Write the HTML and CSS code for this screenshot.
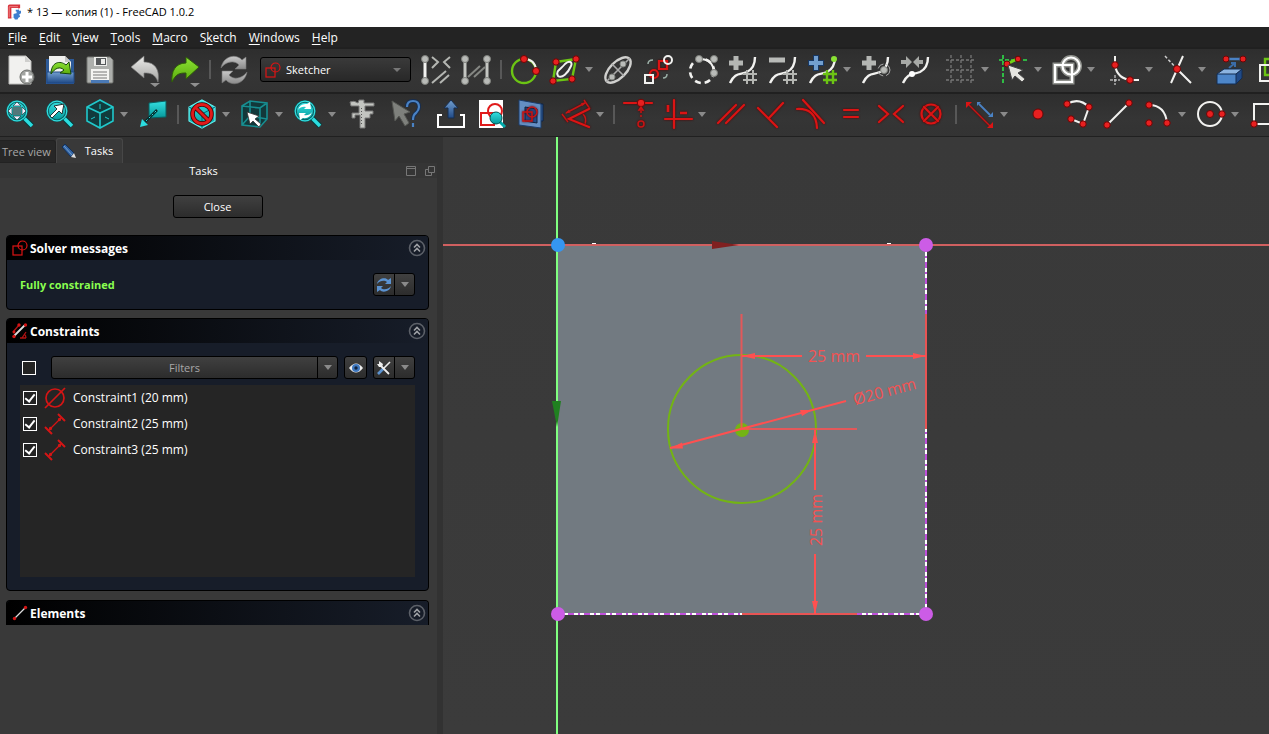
FILE: index.html
```html
<!DOCTYPE html>
<html lang="en">
<head>
<meta charset="utf-8">
<title>* 13 — копия (1) - FreeCAD 1.0.2</title>
<link rel="stylesheet" href="styles.css">
</head>
<body>
<svg class="defs" aria-hidden="true">
  <defs>
    <linearGradient id="cyan" x1="0" y1="0" x2="0" y2="1"><stop offset="0" stop-color="#34e0e2"/><stop offset="1" stop-color="#06989a"/></linearGradient>
    <linearGradient id="blue" x1="0" y1="0" x2="0" y2="1"><stop offset="0" stop-color="#729fcf"/><stop offset="1" stop-color="#204a87"/></linearGradient>
    <linearGradient id="green" x1="0" y1="0" x2="0" y2="1"><stop offset="0" stop-color="#8ae234"/><stop offset="1" stop-color="#5cab0c"/></linearGradient>
    <linearGradient id="grey" x1="0" y1="0" x2="0" y2="1"><stop offset="0" stop-color="#c8c8c8"/><stop offset="1" stop-color="#8a8a8a"/></linearGradient>
    <linearGradient id="silver" x1="0" y1="0" x2="0" y2="1"><stop offset="0" stop-color="#ececea"/><stop offset="1" stop-color="#a4a4a2"/></linearGradient>
    <symbol id="sketch" viewBox="0 0 16 16"><rect x="1" y="6" width="9" height="9"/><circle cx="10.500" cy="5.500" r="4.500"/></symbol>
    <symbol id="collapse" viewBox="0 0 18 18"><circle cx="9" cy="9" r="7.500"/><path d="M6 8.500 9 5.500l3 3M6 12.500l3-3 3 3" stroke="#a0a2a6"/></symbol>
    <symbol id="distance" viewBox="0 0 22 22"><path d="M14 1l7 7M1 14l7 7" stroke-width="2"/><path d="M5 17 17 5" stroke-width="1.200"/><circle cx="6.500" cy="15.500" r=".8"/><circle cx="15.500" cy="6.500" r=".8"/></symbol>
    <symbol id="lens" viewBox="0 0 30 30"><path d="M18 18 27 27" stroke="#053a3b" stroke-width="5.500"/><path d="M18.500 18.500 27 27" stroke="#2bdcdf" stroke-width="3.500"/><circle cx="12" cy="12" r="9.500" fill="url(#cyan)" stroke="#0a5f61" stroke-width="2.600"/><circle cx="12" cy="12" r="9.800" fill="none" stroke="#34e0e2" stroke-width="1.200"/></symbol>
    <symbol id="curve" viewBox="0 0 30 30"><path d="M2 28c5-11 10-8 17-11 6-3 8-8 8-15" fill="none" stroke="#f2f2f0" stroke-width="2.400"/></symbol>
  </defs>
</svg>

<header class="titlebar">
  <svg viewBox="0 0 16 18" aria-hidden="true"><path d="M1 3q0-2 2-2h12v4l-3 1H6v9l-1 2H1z" fill="#d8333c"/><path d="M2.500 3.500h10M2.500 3.500v12" stroke="#f08a8a" fill="none"/><path d="M10 6h3l1 2 2 0v3l-2 1 1 3-2 1-1 2H9l-1-2-2 0v-4l4-1z" fill="#3f7fd0"/><path d="M5 5h8v2H7.500v2H11v2H7.500v5H5z" fill="#fff"/></svg>
  <h1>* 13 — копия (1) - FreeCAD 1.0.2</h1>
</header>

<nav class="menubar" aria-label="Main menu">
  <button><u>F</u>ile</button><button><u>E</u>dit</button><button><u>V</u>iew</button><button><u>T</u>ools</button><button><u>M</u>acro</button><button>S<u>k</u>etch</button><button><u>W</u>indows</button><button><u>H</u>elp</button>
</nav>

<div class="toolbar" role="toolbar" aria-label="File and sketch tools">
  <div class="group">
    <button class="tool" aria-label="New"><svg viewBox="0 0 30 30"><path d="M4 1h17l5 5v23H4z" fill="#f1f1ef" stroke="#bcbcba"/><path d="M20 1v6h6" fill="#cfcfcd"/><circle cx="22" cy="22" r="7" fill="#a2a4a1" stroke="#6d6f6c"/><path d="M22 17v10M17 22h10" stroke="#fff" stroke-width="3"/></svg></button>
    <button class="tool" aria-label="Open"><svg viewBox="0 0 30 30"><path d="M1 4h28v25H1z" fill="#2d5a98"/><path d="M4 1h16l6 6v12H4z" fill="#f1f1ef"/><path d="M20 1v6h6" fill="#c4c4c2"/><path d="M2 17h27v11H2z" fill="url(#blue)" stroke="#204a87"/><path d="M6 19c0-12 9-14 15-9l3-3 2 12-11-1 4-3c-4-4-9-2-13 4z" fill="url(#green)" stroke="#17470a"/></svg></button>
    <button class="tool" aria-label="Save"><svg viewBox="0 0 30 30"><path d="M2 3q0-1 1-1h22l3 3v22q0 1-1 1H3q-1 0-1-1z" fill="#adafac" stroke="#747672"/><path d="M9 2h13v9H9z" fill="#ededeb"/><path d="M11 3h10v7H11z" fill="#55585a"/><path d="M16 4h4v5h-4z" fill="#ededeb"/><path d="M6 14h18v14H6z" fill="#f4f4f2"/><path d="M8 17h14M8 20h14M8 23h14" stroke="#777"/><path d="M6 25h18v3H6z" fill="#4a79b5"/></svg></button>
  </div>
  <div class="group">
    <button class="tool" aria-label="Undo"><svg viewBox="0 0 30 30"><path d="M1 12 14 1v6c12 0 16 9 14 20-3-8-7-9-14-9v5z" fill="url(#silver)" stroke="#777" stroke-width=".7"/><path d="M20 28h10l-5 4z" class="mini"/></svg></button>
    <button class="tool" aria-label="Redo"><svg viewBox="0 0 30 30"><path d="M29 12 16 2v6C5 8 1 17 2 27c4-8 7-9 14-9v6z" fill="url(#green)" stroke="#2e5d08"/><path d="M20 28h10l-5 4z" class="mini"/></svg></button>
    <span class="sep"></span>
    <button class="tool" aria-label="Refresh"><svg viewBox="0 0 30 30"><g fill="url(#grey)" stroke="#767676" stroke-width=".6"><path d="M2 13C4 1 17-2 23 5l4-3v12H16l4-4c-4-5-13-4-18 3z"/><path d="M28 17c-2 12-15 15-21 8l-4 3V16h11l-4 4c4 5 13 4 18-3z"/></g></svg></button>
  </div>
  <div class="combo"><svg class="sk" aria-hidden="true"><use href="#sketch"/></svg><select aria-label="Workbench"><option>Sketcher</option></select></div>
  <div class="group">
    <button class="tool" aria-label="Auto constraints"><svg viewBox="0 0 30 30"><path d="M4 3v24" class="w3"/><g class="g2"><path d="M11 2l6 5-6 6M29 2l-6 5 6 6M11 28l14-12M19 28l9-8"/></g><circle cx="4" cy="4" r="3.500" class="gn"/><circle cx="4" cy="26" r="3.500" class="gn"/></svg></button>
    <button class="tool" aria-label="Avoid redundant constraints"><svg viewBox="0 0 30 30"><path d="M4 4v22M26 4v22" class="g3"/><path d="M7 22 19 11M13 22 24 12" class="g1"/><circle cx="4" cy="4" r="3.500" class="gn"/><circle cx="26" cy="4" r="3.500" class="gn"/><circle cx="4" cy="26" r="3.500" class="gn"/><circle cx="26" cy="26" r="3.500" class="gn"/></svg></button>
    <span class="sep"></span>
    <button class="tool" aria-label="Periodic B-spline"><svg viewBox="0 0 30 30"><circle cx="14" cy="16" r="12" class="gr"/><path d="M14 4q11 0 12 11" class="w2"/><circle cx="14" cy="4" r="3.500" class="node"/><circle cx="26" cy="16" r="3.500" class="node"/></svg></button>
    <button class="tool" aria-label="B-spline geometry"><svg viewBox="0 0 30 30"><path d="M6 7 26 4 22 24 3 26z" class="gr"/><path d="M8 21c-3-5 3-7 7-12 4-4 8-2 6 2-3 7-9 13-13 10z" class="w2"/><circle cx="6" cy="7" r="3.200" class="node"/><circle cx="26" cy="4" r="3.200" class="node"/><circle cx="22" cy="24" r="3.200" class="node"/><circle cx="3" cy="26" r="3.200" class="node"/></svg></button><button class="drop" aria-label="More B-spline geometry"></button>
    <button class="tool" aria-label="Internal geometry"><svg viewBox="0 0 30 30"><ellipse cx="15" cy="15" rx="16" ry="8" transform="rotate(-45 15 15)" fill="none" stroke="#d0d0ce" stroke-width="2.400"/><path d="M3 27 27 3M9 9l12 12" stroke="#aaa" stroke-width="1.600"/><circle cx="20" cy="9" r="3" class="gn"/><circle cx="9" cy="22" r="3" class="gn"/></svg></button>
    <button class="tool" aria-label="Clone"><svg viewBox="0 0 30 30"><g class="r2"><path d="M16 6h8v8h-8z"/><circle cx="11" cy="19" r="4"/></g><path d="M2 20h8v8H2z" class="w2"/><circle cx="25" cy="5" r="4" class="w2"/><path d="M5 9q0-4 5-4M20 23q4 0 4-4" stroke="#9cb0a8" fill="none" stroke-width="1.500"/></svg></button>
  </div>
  <div class="group">
    <button class="tool" aria-label="Convert to B-spline"><svg viewBox="0 0 30 30"><circle cx="14" cy="16" r="12" fill="none" stroke="#f2f2f0" stroke-width="2.600" stroke-dasharray="6 4"/><path d="M12 4q12 0 14 12" class="w2"/><circle cx="11" cy="4" r="3.500" class="gn"/><circle cx="26" cy="4" r="3.500" class="gn"/><circle cx="26" cy="18" r="3.500" class="gn"/></svg></button>
    <button class="tool" aria-label="Increase degree"><svg viewBox="0 0 30 30"><use href="#curve"/><path d="M8 1v14M1 8h14" stroke="#b4b6b3" stroke-width="5"/><path d="M19 15v14M25 15v14M15 19h14M15 25h14" class="g2"/></svg></button>
    <button class="tool" aria-label="Decrease degree"><svg viewBox="0 0 30 30"><use href="#curve"/><path d="M1 5h16" stroke="#b9bbb8" stroke-width="5"/><path d="M19 15v14M25 15v14M15 19h14M15 25h14" class="g2"/></svg></button>
    <button class="tool" aria-label="Increase knot multiplicity"><svg viewBox="0 0 30 30"><use href="#curve"/><path d="M8 0v16M0 8h16" stroke="#173763" stroke-width="6"/><path d="M8 1v14M1 8h14" stroke="#729fcf" stroke-width="4"/><circle cx="26" cy="4" r="3" fill="#8ae234"/><path d="M19 15v14M25 15v14M15 19h14M15 25h14" class="gr"/></svg></button><button class="drop" aria-label="More knot tools"></button>
    <button class="tool" aria-label="Insert knot"><svg viewBox="0 0 30 30"><use href="#curve"/><path d="M8 1v14M1 8h14" stroke="#b4b6b3" stroke-width="5"/><circle cx="23" cy="15" r="3.500" class="gn"/><circle cx="23" cy="15" r="6" fill="none" stroke="#aaa" stroke-dasharray="7 3"/></svg></button>
    <button class="tool" aria-label="Join curves"><svg viewBox="0 0 30 30"><use href="#curve"/><path d="M0 5h5V1l6 6-6 6V9H0zM22 5h-4V1l-6 6 6 6V9h4z" fill="#a7a9a6"/><circle cx="11" cy="19" r="3" fill="#fff"/></svg></button>
  </div>
  <div class="group">
    <button class="tool" aria-label="Toggle grid"><svg viewBox="0 0 30 30"><path d="M5 0v30M15 0v30M25 0v30M0 5h30M0 15h30M0 25h30" stroke="#777" stroke-width="1.300" stroke-dasharray="3 2"/></svg></button><button class="drop" aria-label="Grid options"></button>
    <button class="tool" aria-label="Toggle snap"><svg viewBox="0 0 30 30"><path d="M4 0v30M0 5h30" stroke="#2fe04a" stroke-width="1.600" stroke-dasharray="4 2"/><path d="M8 9 18 4" stroke="#73d216" stroke-width="3"/><circle cx="8" cy="9" r="3" class="node"/><circle cx="19" cy="4" r="2.800" class="node"/><path d="M9 10l4 15 3-4 7 6 3-3-7-6 5-3z" fill="#e5e5e0" stroke="#444"/></svg></button><button class="drop" aria-label="Snap options"></button>
    <button class="tool" aria-label="Rendering order"><svg viewBox="0 0 30 30"><g fill="none" stroke="#92948f" stroke-width="5"><path d="M3 10h17v17H3z"/><circle cx="19" cy="11" r="8.500"/></g><g fill="none" stroke="#fff" stroke-width="2.200"><path d="M3 10h17v17H3z"/><circle cx="19" cy="11" r="8.500"/></g></svg></button><button class="drop" aria-label="Rendering options"></button>
  </div>
  <div class="group">
    <button class="tool" aria-label="Fillet"><svg viewBox="0 0 30 30"><path d="M5 1v9q2 14 17 15h7" class="w2"/><path d="M0 25h10M5 20v10" stroke="#eee" stroke-dasharray="3 1"/><circle cx="5" cy="10" r="3.300" class="node"/><circle cx="20" cy="25" r="3.300" class="node"/></svg></button><button class="drop" aria-label="More fillet tools"></button>
    <button class="tool" aria-label="Trim"><svg viewBox="0 0 30 30"><path d="M20 1 8 28M14 14 28 28" class="w2"/><path d="M2 1l12 13" stroke="#ccc" stroke-width="1.500" stroke-dasharray="3 2"/><circle cx="14" cy="14" r="3.500" class="node"/></svg></button><button class="drop" aria-label="More trim tools"></button>
    <button class="tool" aria-label="External geometry"><svg viewBox="0 0 30 30"><path d="M9 4h18" stroke="#4a82c4" stroke-width="2.500"/><circle cx="10" cy="4" r="3" class="node"/><circle cx="27" cy="4" r="3" class="node"/><path d="M13 13l6-5m-4 0h4v4" stroke="#3a6ca8" fill="none" stroke-width="2"/><path d="M1 19l7-5h18l-6 5z" fill="#8cb4e0"/><path d="M1 19h19v10H1z" fill="#4d86c9"/><path d="M20 19l6-5v9l-6 6z" fill="#204a87"/><path d="M1 19l7-5h18v9l-6 6H1zM1 19h19v10M20 19l6-5" fill="none" stroke="#122c52"/></svg></button>
    <button class="tool" aria-label="Carbon copy"><svg viewBox="0 0 30 30"><path d="M9 4h19v16H9z" class="gr"/><path d="M4 10h16v16H4z" class="w2"/></svg></button>
  </div>
</div>

<div class="toolbar last" role="toolbar" aria-label="View and constraint tools">
  <div class="group">
    <button class="tool" aria-label="Fit all"><svg viewBox="0 0 30 30"><use href="#lens"/><path d="M12 3l4 4H8zM12 21l4-4H8zM3 12l4-4v8zM21 12l-4-4v8z" fill="#eef" stroke="#244" stroke-width=".7"/><path d="M8 8h8v8H8z" fill="#52777a"/></svg></button>
    <button class="tool" aria-label="Fit selection"><svg viewBox="0 0 30 30"><use href="#lens"/><path d="M5 17l7-7-3-3 10-2-2 10-3-3-7 7z" fill="#fff" stroke="#233"/></svg></button>
    <button class="tool" aria-label="Isometric view"><svg viewBox="0 0 30 30"><path d="M15 1 28 8v14l-13 7L2 22V8z" fill="#113b3d" stroke="#20c9cc" stroke-width="1.600"/><path d="M2 8l13 6 13-6M15 14v15" stroke="#20c9cc" fill="none" stroke-width="1.600"/><path d="M15 5v5M6 20l4-2M20 18l4 2" stroke="#20c9cc"/></svg></button><button class="drop" aria-label="More views"></button>
    <button class="tool" aria-label="Align to face"><svg viewBox="0 0 30 30"><path d="M11 4l17-2v16l-17 1z" fill="url(#cyan)" stroke="#0a5f61"/><path d="M19 11 5 25" stroke="#052c2d" stroke-width="2.500"/><path d="M18 12 6 24" stroke="#34e0e2" stroke-dasharray="2 2"/><path d="M2 28l2-8 6 6z" fill="#2bdcdf"/></svg></button>
    <span class="sep"></span>
    <button class="tool" aria-label="Clipping"><svg viewBox="0 0 30 30"><path d="M15 1 28 8v14l-13 7L2 22V8z" fill="url(#cyan)" stroke="#5ff0f0" stroke-width="1.200"/><path d="M2 8l13 7 13-7M15 15v14" stroke="#067" fill="none"/><circle cx="15" cy="15" r="9.500" fill="none" stroke="#400" stroke-width="4.500"/><path d="M8 8l14 14" stroke="#400" stroke-width="4.500"/><circle cx="15" cy="15" r="9.500" fill="none" stroke="#e01b1b" stroke-width="2.800"/><path d="M8 8l14 14" stroke="#e01b1b" stroke-width="2.800"/></svg></button><button class="drop" aria-label="Draw style"></button>
    <button class="tool" aria-label="Bounding box"><svg viewBox="0 0 30 30"><path d="M2 7l8-5 17 2v16l-7 8-18-2z" fill="#12383a"/><path d="M2 7l18 2 7-5M20 9v19M10 2v15l17 3M10 17l-8 9M2 7l8-5 17 2v16l-7 8-18-2z" fill="none" stroke="#178e91" stroke-width="1.600"/><path d="M7 13l3 12 3-3 6 6 2-3-6-5 4-3z" fill="#fff" stroke="#333" stroke-width=".8"/></svg></button><button class="drop" aria-label="Selection options"></button>
    <button class="tool" aria-label="Sync view"><svg viewBox="0 0 30 30"><use href="#lens"/><path d="M5 11q2-7 9-6l3-2 1 7h-7l2-2q-5-1-8 3zM19 13q-2 7-9 6l-3 2-1-7h7l-2 2q5 1 8-3z" fill="#fff"/></svg></button><button class="drop" aria-label="Zoom options"></button>
    <button class="tool" aria-label="Measure"><svg viewBox="0 0 30 30"><path d="M4 3q4-2 8 1l1-3h5v3h10v3h-9v5h8v3h-3v4h-5v10h-5V16H9v3H6v-5h7V7H5z" fill="#c3c5c1" stroke="#777"/><path d="M15.500 9v18" stroke="#555" stroke-dasharray="1 2"/></svg></button>
  </div>
  <div class="group"><button class="tool" aria-label="What's this"><svg viewBox="0 0 30 30"><path d="M1 2l3 20 4-5 6 10 4-3-5-9 6-2z" fill="#7e807c" stroke="#555753"/><path d="M16 8q0-6 6-6 6 0 6 6 0 3-3 6-3 2-3 7" fill="none" stroke="#172e50" stroke-width="4"/><path d="M16 8q0-6 6-6 6 0 6 6 0 3-3 6-3 2-3 7M22 24v4" fill="none" stroke="#4a82c4" stroke-width="2.200"/></svg></button></div>
  <div class="group">
    <button class="tool" aria-label="Leave sketch"><svg viewBox="0 0 30 30"><path d="M6 16H2v12h26V16h-4" fill="none" stroke="#fff" stroke-width="2"/><path d="M15 1l7 8h-4v10h-6V9H8z" fill="url(#blue)" stroke="#172e50"/></svg></button>
    <button class="tool" aria-label="View sketch"><svg viewBox="0 0 30 30"><path d="M3 1h24v28H3z" fill="#fff"/><g fill="none" stroke="#e01b1b" stroke-width="2"><path d="M5 14h13v12H5z"/><circle cx="19" cy="12" r="7"/></g><path d="M24 23l5 5" stroke="#0aa" stroke-width="3"/><circle cx="20" cy="19" r="6" fill="url(#cyan)" stroke="#055"/></svg></button>
    <button class="tool" aria-label="View section"><svg viewBox="0 0 30 30"><path d="M10 5h17v17H10z" fill="#2d5a98" stroke="#0d2344"/><path d="M3 1l22 4v24L3 26z" fill="#648fc4" stroke="#1c3c69"/><path d="M9 8l12 2v14l-12-2z" fill="#224c89" stroke="#10233f"/><g class="r1"><path d="M7 13h9v9H7z"/><circle cx="16" cy="13" r="5"/></g></svg></button>
  </div>
  <div class="group">
    <button class="tool" aria-label="Dimension"><svg viewBox="0 0 30 30"><g class="r1"><path d="M1 15l6 8M23 1l6 9M5 14 24 4"/><path d="M22 15q4 4 2 10"/></g><path d="M4 14.500l4-4 1.500 3zM25 3.500l-5 .5 1.500 3z" fill="#c81414"/><path d="M28 10 8 20l20 8" class="r2"/></svg></button><button class="drop" aria-label="More dimensions"></button>
    <span class="sep"></span>
    <button class="tool" aria-label="Constrain coincident"><svg viewBox="0 0 30 30"><path d="M1 4h28" class="r2"/><circle cx="18" cy="4" r="3.800" class="node"/><g class="r1"><path d="M18 12v8" stroke-dasharray="2 2"/><path d="M16 11l2-3 2 3z"/><circle cx="18" cy="25" r="3"/></g></svg></button>
    <button class="tool" aria-label="Constrain horizontal or vertical"><svg viewBox="0 0 30 30"><path d="M11 1v28M2 20h27" class="r2"/><path d="M5 6v7M17 14h7" class="r3"/></svg></button><button class="drop" aria-label="More orientation constraints"></button>
    <button class="tool" aria-label="Constrain parallel"><svg viewBox="0 0 30 30"><path d="M2 24 20 6M10 24 28 6" class="r2"/></svg></button>
    <button class="tool" aria-label="Constrain perpendicular"><svg viewBox="0 0 30 30"><path d="M2 9l19 19M13 19 27 4" class="r2"/></svg></button>
    <button class="tool" aria-label="Constrain tangent"><svg viewBox="0 0 30 30"><path d="M7 1 28 24M1 10q19-1 20 19" class="r2"/></svg></button>
    <button class="tool" aria-label="Constrain equal"><svg viewBox="0 0 30 30"><path d="M8 11h14M8 18h14" class="r2"/></svg></button>
    <button class="tool" aria-label="Constrain symmetric"><svg viewBox="0 0 30 30"><path d="M3 7l9 8-9 8M27 7l-9 8 9 8" class="r2"/></svg></button>
    <button class="tool" aria-label="Constrain block"><svg viewBox="0 0 30 30"><circle cx="15" cy="15" r="9.500" class="r2"/><path d="M8 8l14 14M22 8 8 22" class="r2"/></svg></button>
    <span class="sep"></span>
    <button class="tool" aria-label="Toggle driving constraint"><svg viewBox="0 0 30 30"><path d="M4 6l21 21" class="r1"/><path d="M1 3h6l-6 6zM28 29h-6l6-6z" fill="#dc1414"/><path d="M14 5l11 11" stroke="#4a82c4" stroke-width="1.800"/><path d="M12 3h4l-4 4zM28 18h-5l5-5z" fill="#4a82c4"/></svg></button><button class="drop" aria-label="Constraint options"></button>
  </div>
  <div class="group">
    <button class="tool" aria-label="Point"><svg viewBox="0 0 30 30"><circle cx="15" cy="15" r="5" class="node"/></svg></button>
    <button class="tool" aria-label="Polyline"><svg viewBox="0 0 30 30"><path d="M4 5q12-7 22 3l-6 17L8 20" class="w2"/><circle cx="4" cy="5" r="3.200" class="node"/><circle cx="26" cy="8" r="3.200" class="node"/><circle cx="20" cy="25" r="3.200" class="node"/><circle cx="8" cy="20" r="3.200" class="node"/></svg></button>
    <button class="tool" aria-label="Line"><svg viewBox="0 0 30 30"><path d="M4 26 26 4" class="w2"/><circle cx="4" cy="26" r="3.200" class="node"/><circle cx="26" cy="4" r="3.200" class="node"/></svg></button>
    <button class="tool" aria-label="Arc"><svg viewBox="0 0 30 30"><path d="M6 6q16 0 18 18" class="w2"/><circle cx="6" cy="6" r="3.200" class="node"/><circle cx="24" cy="24" r="3.200" class="node"/><circle cx="6" cy="24" r="3.200" class="node"/></svg></button><button class="drop" aria-label="More arcs"></button>
    <button class="tool" aria-label="Circle"><svg viewBox="0 0 30 30"><circle cx="14" cy="15" r="12" class="w2"/><circle cx="14" cy="15" r="3.500" class="node"/><circle cx="26" cy="15" r="3.200" class="node"/></svg></button><button class="drop" aria-label="More circles"></button>
    <button class="tool" aria-label="Rectangle"><svg viewBox="0 0 30 30"><path d="M5 5h24v20H5z" class="w2"/><circle cx="5" cy="25" r="3.200" class="node"/></svg></button>
  </div>
</div>

<main>
  <aside class="dock">
    <div class="tabs" role="tablist">
      <button role="tab" aria-selected="false">Tree view</button>
      <button role="tab" aria-selected="true"><svg viewBox="0 0 16 16" aria-hidden="true"><path d="M1 4 4 1l9 9-3 4z" fill="#3465a4" stroke="#142f55"/><path d="M3 3l8 9" stroke="#729fcf"/><path d="M10 14l3-4 2 5z" fill="#ddd"/></svg>Tasks</button>
    </div>
    <div class="docktitle"><h2>Tasks</h2>
      <button aria-label="Minimise"><svg viewBox="0 0 10 10"><path d="M.5.500h9v9h-9zM1 2.500h8"/></svg></button>
      <button aria-label="Float"><svg viewBox="0 0 10 10"><path d="M3.500.500h6v6h-6zM3.500 3.500h-3v6h6v-3"/></svg></button>
    </div>
    <div class="panel">
      <button class="btn close">Close</button>

      <section class="box solver">
        <h3><svg class="sk" aria-hidden="true"><use href="#sketch"/></svg><span>Solver messages</span><button aria-label="Collapse"><svg><use href="#collapse"/></svg></button></h3>
        <div class="body row">
          <strong>Fully constrained</strong>
          <div class="split"><button class="btn" aria-label="Update"><svg viewBox="0 0 16 16"><path d="M1 7c1-6 9-7 11-4l3-2v6H9l2-2C9 3 4 3 1 7zM15 9c-1 6-9 7-11 4l-3 2V9h6l-2 2c2 2 7 2 10-2z" fill="#5b92d0"/></svg></button><button class="btn drop" aria-label="Update options"></button></div>
        </div>
      </section>

      <section class="box">
        <h3><svg viewBox="0 0 16 16" aria-hidden="true"><path d="M2 13 13 2" stroke="#ddd" stroke-width="1.800"/><path d="M1 9 7 2M10 15l4-6M8 15h6M12 11q2 1 2 4" fill="none" stroke="#b01212" stroke-width="1.300"/><circle cx="2" cy="9" r="1.500" fill="#d41515"/><circle cx="7" cy="2" r="1.700" fill="#d41515"/><circle cx="13.500" cy="2" r="1.700" fill="#d41515"/><circle cx="2" cy="13.500" r="1.700" fill="#d41515"/></svg><span>Constraints</span><button aria-label="Collapse"><svg><use href="#collapse"/></svg></button></h3>
        <div class="body">
          <div class="row filters">
            <input type="checkbox" aria-label="Select all constraints">
            <div class="split wide"><button class="btn">Filters</button><button class="btn drop" aria-label="Filter list"></button></div>
            <button class="btn square" aria-label="Show or hide"><svg viewBox="0 0 16 16"><path d="M1 8q7-9 14 0-7 9-14 0z" fill="#eee"/><circle cx="8" cy="8" r="4" fill="#3f78bf"/><circle cx="8" cy="8" r="1.700" fill="#10233f"/></svg></button>
            <div class="split"><button class="btn" aria-label="Settings"><svg viewBox="0 0 16 16"><path d="M2 14 8 8" stroke="#5b92d0" stroke-width="2.600"/><path d="M7 9 14 2" stroke="#eee" stroke-width="1.600"/><path d="M4 5l9 9" stroke="#eee" stroke-width="1.800"/><path d="M3 1v3H1l2 3h3l1-3z" fill="#eee"/></svg></button><button class="btn drop" aria-label="Settings options"></button></div>
          </div>
          <ul>
            <li><label><input type="checkbox" checked><svg viewBox="0 0 22 22" class="ci"><circle cx="11" cy="11" r="9"/><path d="M1 21 21 1"/></svg>Constraint1 (20 mm)</label></li>
            <li><label><input type="checkbox" checked><svg class="ci"><use href="#distance"/></svg>Constraint2 (25 mm)</label></li>
            <li><label><input type="checkbox" checked><svg class="ci"><use href="#distance"/></svg>Constraint3 (25 mm)</label></li>
          </ul>
        </div>
      </section>

      <section class="box open">
        <h3><svg viewBox="0 0 16 16" aria-hidden="true"><path d="M2 14 14 2" stroke="#ddd" stroke-width="1.200"/><circle cx="2.500" cy="13.500" r="1.700" fill="#d41515"/><circle cx="13.500" cy="2.500" r="1.700" fill="#d41515"/></svg><span>Elements</span><button aria-label="Collapse"><svg><use href="#collapse"/></svg></button></h3>
      </section>
    </div>
  </aside>

  <svg class="canvas" role="img" aria-label="Sketch: a 20 mm circle placed 25 mm from two edges">
    <g transform="translate(115 108)">
      <rect x="0" y="0" width="368" height="369" fill="#727a81"/>
      <path d="M-1-200V2000" stroke="#80ff80" stroke-width="2"/>
      <g class="edge"><path d="M0 369H368V0"/><path d="M0 369H368V0" class="dash"/></g>
      <path d="M-200 0H3000" stroke="#d06060" stroke-width="2"/>
      <path d="M34-1.500h4M329-1.500h4" stroke="#fff"/>
      <path d="M154-4l27 4-27 4z" fill="#802020"/>
      <path d="M-6 156h9l-4 26z" fill="#208020"/>
      <circle cx="184" cy="184" r="74" fill="none" stroke="#73b414" stroke-width="2"/>
      <circle cx="184" cy="185" r="7" fill="#73b414"/>
      <g class="dim">
        <path d="M183.500 69V184M183 184H299" opacity=".8"/>
        <path d="M368 69V184M184 369H299" stroke="#e85454"/>
        <path d="M184 111h60M308 111h60M257 185v60M257 309v60M112 203 288 156"/>
        <path class="tip" d="M184 111l13-3v6zM368 111l-13-3v6zM257 185l-3 13h6zM257 369l-3-13h6zM112 203.500l12-6 1 6zM254 165l-12 0 2 6z"/>
        <text x="276" y="117">25 mm</text>
        <text transform="translate(328 152) rotate(-15)">Ø20 mm</text>
        <text transform="translate(264 275) rotate(-90)">25 mm</text>
      </g>
      <circle r="7" fill="#3596f0"/>
      <circle cx="368" r="7" class="vertex"/><circle cy="369" r="7" class="vertex"/><circle cx="368" cy="369" r="7" class="vertex"/>
    </g>
  </svg>
</main>
</body>
</html>
```

FILE: styles.css
```css
* { box-sizing: border-box; }
body { margin: 0; height: 100vh; display: flex; flex-direction: column; overflow: hidden; background: #333; color: #fff; font: 12px/16px "Open Sans", "Noto Sans", sans-serif; }
button, select, input { font: inherit; color: inherit; margin: 0; }
button { border: 0; padding: 0; background: none; }
h1, h2, h3, ul { margin: 0; padding: 0; font: inherit; }
.defs { position: absolute; width: 0; height: 0; }

.titlebar { flex: none; height: 27px; padding: 0 7px 4px; display: flex; align-items: center; gap: 6px; background: #fff; color: #000; font-size: 11px; }
.titlebar svg { width: 14px; height: 17px; }

.menubar { flex: none; height: 20px; padding: 2px 2px 0; display: flex; align-items: center; background: #232323; }
.menubar button { padding: 0 6px; }
.menubar u { text-underline-offset: 2px; }

.toolbar { flex: none; height: 45px; padding-bottom: 2px; display: flex; align-items: center; gap: 5px; overflow: hidden; border-top: 2px solid #202020; background: linear-gradient(#2e2e2e, #353535 60%, #333); }
.toolbar.last { border-bottom: 1px solid #202020; }
.group { flex: none; display: flex; align-items: center; }
.tool { width: 40px; height: 40px; display: grid; place-items: center; flex: none; }
.tool svg { width: 30px; height: 30px; overflow: visible; }
.drop { width: 13px; height: 30px; display: grid; place-items: center start; flex: none; }
.drop::before { content: ""; border: 4px solid transparent; border-top: 5px solid #8a8a8a; border-bottom: 0; }
.sep { width: 9px; display: grid; place-items: center; }
.sep::before { content: ""; width: 2px; height: 19px; background: #585858; }
.mini { fill: #909090; }

.combo { flex: none; width: 151px; height: 25px; display: grid; align-items: center; margin-left: 1px; }
.combo > * { grid-area: 1 / 1; }
.combo svg { z-index: 1; width: 16px; height: 16px; margin-left: 5px; }
.combo select { appearance: none; width: 100%; height: 25px; padding: 0 0 0 25px; border: 1px solid #000; border-radius: 3px; background: linear-gradient(#3a3a3a, #282828); font-size: 11px; }
.combo::after { content: ""; grid-area: 1 / 1; justify-self: end; z-index: 1; margin-right: 10px; border: 4px solid transparent; border-top: 4px solid #777; border-bottom: 0; pointer-events: none; }

.w2, .w3, .g1, .g2, .g3, .gr, .r1, .r2, .r3 { fill: none; }
.w2 { stroke: #f2f2f0; stroke-width: 2; }
.w3 { stroke: #f2f2f0; stroke-width: 3; }
.g1 { stroke: #858783; stroke-width: 2; }
.g2 { stroke: #b4b6b2; stroke-width: 2; }
.g3 { stroke: #c4c6c2; stroke-width: 3; }
.gr { stroke: #6cc414; stroke-width: 2.4; }
.r1 { stroke: #c81414; stroke-width: 1.5; }
.r2 { stroke: #dc1414; stroke-width: 2.2; stroke-linecap: round; }
.r3 { stroke: #dc1414; stroke-width: 2.6; }
.r1, .r2, .r3 { filter: drop-shadow(0 0 1px #500); }
.node { fill: #e82020; stroke: #6b0505; stroke-width: 1; }
.gn { fill: #b9bbb8; stroke: #7d7f7b; stroke-width: 1; }
.sk { fill: none; stroke: #dc1414; stroke-width: 1.2; }

main { flex: 1; min-height: 0; display: flex; }
.dock { flex: none; width: 443px; padding-right: 6px; display: flex; flex-direction: column; background: #323232; }
.tabs { height: 26px; display: flex; align-items: end; font-size: 11px; }
.tabs button { height: 23px; padding: 0 4px 0 2px; display: flex; align-items: center; color: #a8a8a8; background: #272727; border: 1px solid #222; border-left: 0; border-radius: 0 3px 0 0; }
.tabs [aria-selected="true"] { height: 25px; padding: 0 9px 0 4px; gap: 8px; color: #fff; background: #393939; border: 1px solid #474747; border-bottom: 0; border-radius: 3px 3px 0 0; }
.tabs svg { width: 16px; height: 16px; }
.docktitle { height: 15px; display: flex; align-items: center; gap: 9px; padding: 0 2px 0 10px; background: #353535; font-size: 11px; }
.docktitle h2 { flex: 1; text-align: center; }
.docktitle svg { display: block; width: 10px; height: 10px; fill: none; stroke: #777; }

.panel { flex: 1; padding: 17px 8px 0 6px; display: flex; flex-direction: column; align-items: stretch; gap: 8px; background: #393939; }
.btn { height: 23px; display: grid; place-items: center; border: 1px solid #000; border-radius: 3px; background: linear-gradient(#404040, #2c2c2c); font-size: 11px; }
.close { width: 90px; align-self: center; margin-bottom: 9px; }
.box { background: #171d29; border: 1px solid #000; border-radius: 4px; }
.box + .box + .box { margin-top: 1px; }
.open { border-bottom: 0; border-radius: 4px 4px 0 0; }
.box h3 { height: 24px; padding: 0 2px 0 5px; display: flex; align-items: center; gap: 2px; background: linear-gradient(90deg, #000, #171d29); border-radius: 3px 3px 0 0; font-weight: 700; }
.box h3 span { flex: 1; padding-top: 2px; }
.box h3 > svg { width: 16px; height: 16px; }
.box h3 button svg { display: block; width: 18px; height: 18px; fill: none; stroke: #5c6068; stroke-width: 1.6; }
.body { padding: 13px; }
.row { display: flex; align-items: center; }
.solver .row { justify-content: space-between; }
.solver strong { color: #8aff50; font-size: 11px; }
.split { display: flex; }
.split .btn { width: 22px; border-radius: 3px 0 0 3px; }
.split .btn.drop { width: 21px; margin-left: -1px; place-items: center; border-radius: 0 3px 3px 0; }
.square { width: 23px; }
.btn svg { width: 16px; height: 16px; }
.filters { gap: 6px; padding-left: 2px; }
.wide { flex: 1; margin-left: 9px; }
.split.wide .btn:first-child { flex: 1; color: #a8a8a8; }
input[type="checkbox"] { appearance: none; flex: none; width: 14px; height: 14px; border: 1px solid #fff; background: #232323; display: grid; place-items: center; }
input:checked::before { content: ""; width: 4px; height: 8px; border: solid #fff; border-width: 0 2px 2px 0; transform: translateY(-1px) rotate(38deg); }
.box ul { height: 192px; margin-top: 6px; background: #252525; list-style: none; }
.box li label { height: 26px; padding-left: 3px; display: flex; align-items: center; }
.ci { width: 22px; height: 22px; margin: 0 7px; fill: none; stroke: #d41515; stroke-width: 1.7; }

.canvas { flex: 1; min-width: 0; height: 100%; background: linear-gradient(#393939, #3b3b3b); }
.edge { fill: none; stroke: #c050dc; stroke-width: 2; }
.dash { stroke: #fff; stroke-dasharray: 4 2 4 6; }
.vertex { fill: #cc5ce6; }
.dim { stroke: #ff5050; stroke-width: 2; fill: none; }
.dim .tip { fill: #ff5050; stroke: none; }
.dim text { font-size: 16px; font-weight: 400; fill: #f45252; stroke: none; text-anchor: middle; }
```
